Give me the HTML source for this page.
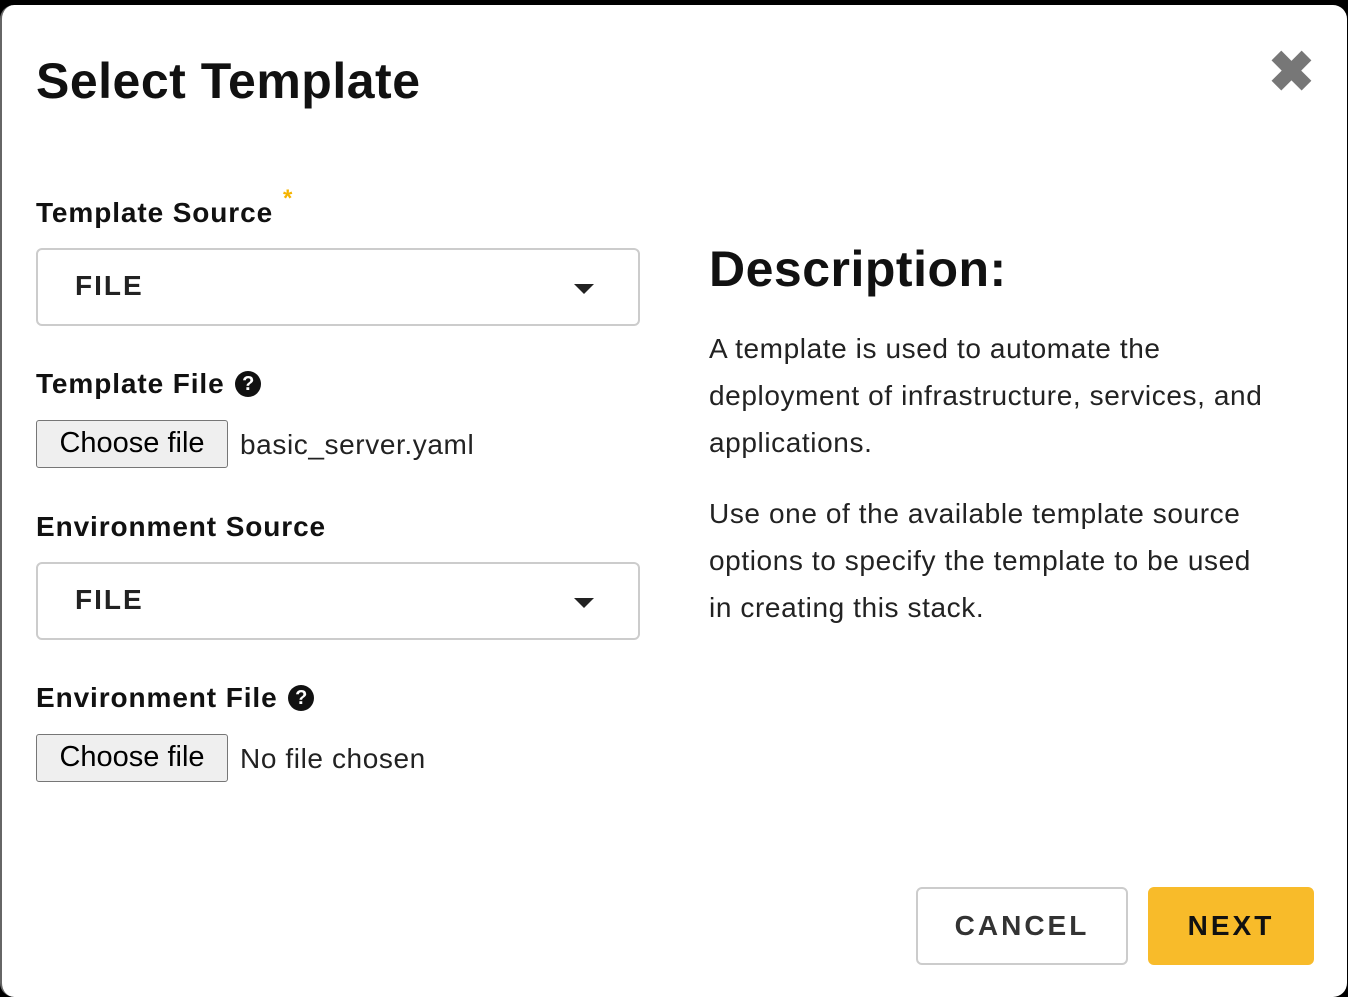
<!DOCTYPE html>
<html><head><style>
body{margin:0;width:1348px;height:997px;background:#000;font-family:"Liberation Sans",sans-serif;overflow:hidden;position:relative}
.modal{position:absolute;left:0;top:5px;width:1347px;height:992px;background:#fff;border-radius:14px;border-left:2px solid #666;box-sizing:border-box}
.a{position:absolute;white-space:nowrap}
h1{position:absolute;left:34px;top:47px;margin:0;font-size:50px;font-weight:bold;color:#111;letter-spacing:0.5px}
.lbl{font-size:28px;font-weight:bold;color:#111;letter-spacing:0.9px}
.sel{position:absolute;left:34px;width:604px;height:78px;border:2px solid #ccc;border-radius:6px;box-sizing:border-box}
.sel span{position:absolute;left:37px;top:20px;font-size:28px;font-weight:bold;letter-spacing:2px;color:#222}
.sel i{position:absolute;right:44px;top:34px;border-left:10px solid transparent;border-right:10px solid transparent;border-top:10px solid #222}
.btnf{position:absolute;left:34px;width:192px;height:48px;background:#efefef;border:1px solid #767676;border-radius:3px;box-sizing:border-box;font-size:29px;text-align:center;line-height:44px;color:#000}
.q{display:inline-block;width:26px;height:26px;border-radius:50%;background:#111;color:#fff;font-size:20px;line-height:26px;text-align:center;vertical-align:3px;margin-left:2px;letter-spacing:0}
.p{font-size:28px;color:#222;line-height:47px;position:absolute;left:707px;white-space:nowrap;letter-spacing:0.6px}
</style></head><body>
<div class="modal">
<h1>Select Template</h1>
<div class="a" style="left:1266px;top:34px;font-size:56px;font-weight:bold;color:#777">✖</div>
<div class="a lbl" style="left:34px;top:192px">Template Source</div>
<div class="a" style="left:281px;top:180px;color:#f6b400;font-size:24px;font-weight:bold">*</div>
<div class="sel" style="top:243px"><span>FILE</span><i></i></div>
<div class="a lbl" style="left:34px;top:363px">Template File <span class="q">?</span></div>
<div class="btnf" style="top:415px">Choose file</div>
<div class="a" style="left:238px;top:424px;font-size:28px;color:#222;letter-spacing:0.6px">basic_server.yaml</div>
<div class="a lbl" style="left:34px;top:506px">Environment Source</div>
<div class="sel" style="top:557px"><span>FILE</span><i></i></div>
<div class="a lbl" style="left:34px;top:677px">Environment File <span class="q">?</span></div>
<div class="btnf" style="top:729px">Choose file</div>
<div class="a" style="left:238px;top:738px;font-size:28px;color:#222;letter-spacing:0.6px">No file chosen</div>
<div class="a" style="left:707px;top:235px;font-size:50px;font-weight:bold;color:#111;letter-spacing:0.5px">Description:</div>
<div class="p" style="top:320px">A template is used to automate the<br>deployment of infrastructure, services, and<br>applications.</div>
<div class="p" style="top:485px">Use one of the available template source<br>options to specify the template to be used<br>in creating this stack.</div>
<div class="a" style="left:914px;top:882px;width:212px;height:78px;border:2px solid #ccc;border-radius:6px;box-sizing:border-box;text-align:center;line-height:74px;font-size:28px;font-weight:bold;letter-spacing:3px;color:#333">CANCEL</div>
<div class="a" style="left:1146px;top:882px;width:166px;height:78px;background:#f8bb2a;border-radius:6px;text-align:center;line-height:78px;font-size:28px;font-weight:bold;letter-spacing:3px;color:#111">NEXT</div>
</div>
</body></html>
